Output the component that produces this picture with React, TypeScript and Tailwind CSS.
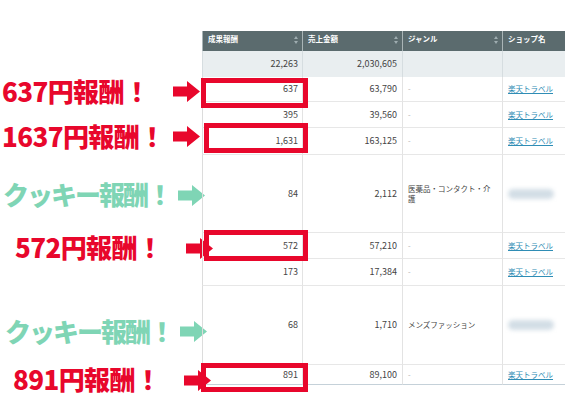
type Row = {
  reward: string;
  sales: string;
  genre: string;
  shop: 'link' | 'blur';
  h: string;
  last?: boolean;
  label?: { text: string; green?: boolean; cls: string };
  box?: string;
};

const ROWS: Row[] = [
  {
    reward: '637',
    sales: '63,790',
    genre: '-',
    shop: 'link',
    h: 'h-[25px]',
    label: { text: '637円報酬！', cls: 'pl-[2px] translate-y-[2px]' },
    box: 'top-[1px] left-[-2px] w-[107px] h-[30px]',
  },
  { reward: '395', sales: '39,560', genre: '-', shop: 'link', h: 'h-[26px]' },
  {
    reward: '1,631',
    sales: '163,125',
    genre: '-',
    shop: 'link',
    h: 'h-[27px]',
    label: { text: '1637円報酬！', cls: 'pl-[2px] -translate-y-[5px]' },
    box: 'top-[-5px] left-[1px] w-[104px] h-[30px]',
  },
  {
    reward: '84',
    sales: '2,112',
    genre: '医薬品・コンタクト・介護',
    shop: 'blur',
    h: 'h-[78px]',
    label: { text: 'クッキー報酬！', green: true, cls: 'pl-[3px] translate-y-[1px]' },
  },
  {
    reward: '572',
    sales: '57,210',
    genre: '-',
    shop: 'link',
    h: 'h-[26px]',
    label: { text: '572円報酬！', cls: 'pl-[15px] translate-y-[2px]' },
    box: 'top-[-3px] left-[1px] w-[104px] h-[31px]',
  },
  { reward: '173', sales: '17,384', genre: '-', shop: 'link', h: 'h-[27px]' },
  {
    reward: '68',
    sales: '1,710',
    genre: 'メンズファッション',
    shop: 'blur',
    h: 'h-[79px]',
    label: { text: 'クッキー報酬！', green: true, cls: 'pl-[5px] translate-y-[6px]' },
  },
  {
    reward: '891',
    sales: '89,100',
    genre: '-',
    shop: 'link',
    h: 'h-[20px]',
    last: true,
    label: { text: '891円報酬！', cls: 'pl-[13px] translate-y-[5px]' },
    box: 'top-[-2px] left-[-2px] w-[107px] h-[29px]',
  },
];

function Arrow({ green }: { green?: boolean }) {
  return (
    <svg width="27" height="21" viewBox="0 0 27 21" className="shrink-0">
      <polygon
        points="0,5.5 14,5.5 14,0 27,10.5 14,21 14,15.5 0,15.5"
        fill={green ? '#7fd5b5' : '#e8072c'}
      />
    </svg>
  );
}

function SortIcon() {
  return (
    <svg width="4" height="8" viewBox="0 0 4 8" className="mt-[2px] shrink-0">
      <polygon points="0,3 2,0 4,3" fill="#9fadb0" />
      <polygon points="0,5 2,8 4,5" fill="#9fadb0" />
    </svg>
  );
}

function HeaderCell({ label, sort, first }: { label: string; sort?: boolean; first?: boolean }) {
  return (
    <div
      className={`flex items-start justify-between bg-[#5b6b6e] pl-[5px] pr-[4px] pt-[3px] text-[7.5px] font-bold leading-[10px] text-white ${
        first ? 'w-[101px] border-l border-[#9aa7a9]' : 'w-[100px]'
      } ${sort ? 'border-r border-[#a9b4b6]' : 'flex-1'}`}
    >
      <span>{label}</span>
      {sort && <SortIcon />}
    </div>
  );
}

function Label({ text, green }: { text: string; green?: boolean }) {
  return (
    <span
      className={`whitespace-nowrap text-[26px] font-black leading-none ${
        green ? 'tracking-[-2px] text-[#7fd5b5]' : 'tracking-[-0.6px] text-[#e8072c]'
      }`}
    >
      {text}
    </span>
  );
}

function DataRow({ row }: { row: Row }) {
  const line = row.last ? 'border-b border-[#c5d1d9]' : 'border-b border-[#e7e7e7]';
  return (
    <div className={`flex ${row.h}`}>
      <div className={`flex w-[202px] shrink-0 items-center ${row.label?.cls ?? ''}`}>
        {row.label && (
          <>
            <div className={row.label.green ? 'w-[175px] shrink-0' : 'w-[171px] shrink-0'}>
              <Label text={row.label.text} green={row.label.green} />
            </div>
            <Arrow green={row.label.green} />
          </>
        )}
      </div>
      <div className={`relative flex w-[101px] items-center justify-end border-l border-r border-l-[#dcdcdc] border-r-[#e3e3e3] pr-[4px] ${line}`}>
        {row.reward}
        {row.box && (
          <div className={`absolute z-10 border-[5px] border-[#e8072c] ${row.box}`} />
        )}
      </div>
      <div className={`flex w-[100px] items-center justify-end border-r border-r-[#e3e3e3] pr-[5px] ${line}`}>
        {row.sales}
      </div>
      <div
        className={`flex w-[100px] items-center border-r border-r-[#e3e3e3] pl-[5px] pr-[8px] text-[7.5px] leading-[10px] ${line} ${
          row.genre === '-' ? 'text-[#aaaaaa]' : 'text-[#444444]'
        }`}
      >
        {row.genre}
      </div>
      <div className={`flex flex-1 items-center pl-[5px] ${line}`}>
        {row.shop === 'link' ? (
          <span className="text-[7.5px] text-[#2f8db5] underline">楽天トラベル</span>
        ) : (
          <div className="h-[10px] w-[46px] rounded-full bg-[#d3dee6] blur-[2px]" />
        )}
      </div>
    </div>
  );
}

export default function App() {
  return (
    <div className="h-[396px] w-[565px] overflow-hidden bg-white pt-[31px] font-['Noto_Sans_CJK_JP',sans-serif] text-[9px] text-[#444444]">
      <div className="flex h-[20px]">
        <div className="w-[202px] shrink-0" />
        <HeaderCell label="成果報酬" sort first />
        <HeaderCell label="売上金額" sort />
        <HeaderCell label="ジャンル" sort />
        <HeaderCell label="ショップ名" />
      </div>
      <div className="flex h-[26px]">
        <div className="w-[202px] shrink-0" />
        <div className="flex w-[101px] items-center justify-end border-l border-r border-[#d6dde0] bg-[#e9eef0] pr-[4px]">
          22,263
        </div>
        <div className="flex w-[100px] items-center justify-end border-r border-[#d6dde0] bg-[#e9eef0] pr-[5px]">
          2,030,605
        </div>
        <div className="w-[100px] border-r border-[#d6dde0] bg-[#e9eef0]" />
        <div className="flex-1 bg-[#e9eef0]" />
      </div>
      {ROWS.map((row, i) => (
        <DataRow key={i} row={row} />
      ))}
    </div>
  );
}
